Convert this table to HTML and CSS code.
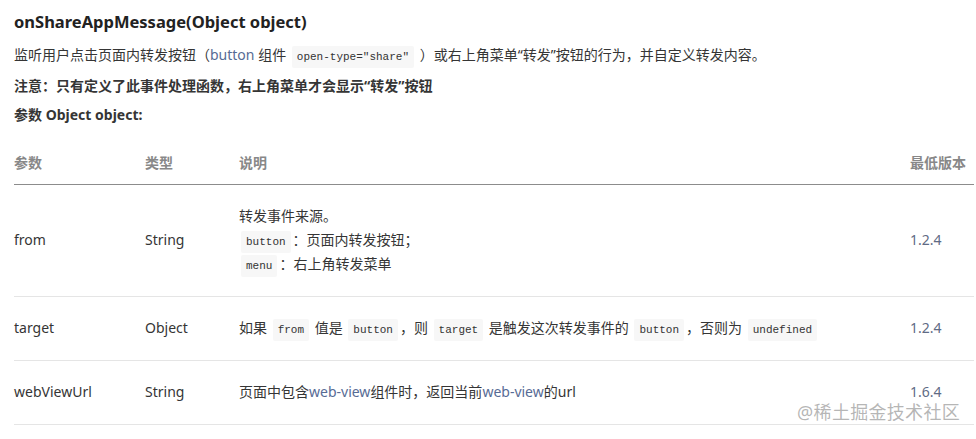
FILE: index.html
```html
<!DOCTYPE html>
<html lang="zh-CN">
  <head>
    <meta charset="utf-8" />
    <title>onShareAppMessage</title>
    <link rel="stylesheet" href="styles.css">
  </head>
  <body>
    <div class="doc">
      <h3 class="api-title">onShareAppMessage(Object object)</h3>
      <p>监听用户点击页面内转发按钮（<a href="#">button</a> 组件 <code>open-type="share"</code> ）或右上角菜单“转发”按钮的行为，并自定义转发内容。</p>
      <p class="note">注意：只有定义了此事件处理函数，右上角菜单才会显示“转发”按钮</p>
      <p class="param-title">参数 Object object:</p>

      <table class="param-table">
        <colgroup>
          <col class="col-name" />
          <col class="col-type" />
          <col class="col-desc" />
          <col class="col-ver" />
        </colgroup>
        <thead>
          <tr>
            <th>参数</th>
            <th>类型</th>
            <th>说明</th>
            <th>最低版本</th>
          </tr>
        </thead>
        <tbody>
          <tr>
            <td>from</td>
            <td>String</td>
            <td>
              <div>转发事件来源。</div>
              <div><code>button</code>：页面内转发按钮；</div>
              <div><code>menu</code>：右上角转发菜单</div>
            </td>
            <td><a href="#" class="ver">1.2.4</a></td>
          </tr>
          <tr>
            <td>target</td>
            <td>Object</td>
            <td>如果 <code>from</code> 值是 <code>button</code>，则 <code>target</code> 是触发这次转发事件的 <code>button</code>，否则为 <code>undefined</code></td>
            <td><a href="#" class="ver">1.2.4</a></td>
          </tr>
          <tr>
            <td>webViewUrl</td>
            <td>String</td>
            <td>页面中包含<a href="#">web-view</a>组件时，返回当前<a href="#">web-view</a>的url</td>
            <td><a href="#" class="ver">1.6.4</a></td>
          </tr>
        </tbody>
      </table>

      <div class="watermark">@稀土掘金技术社区</div>
    </div>
  </body>
</html>
```

FILE: styles.css
```css
* {
  margin: 0;
  padding: 0;
  box-sizing: border-box;
}

body {
  font-family: "Noto Sans", "Noto Sans CJK SC", sans-serif;
  font-size: 14px;
  color: #353535;
  background: #ffffff;
}

.doc {
  position: relative;
  padding: 10px 2px 0 14px;
}

.api-title {
  font-size: 16.5px;
  font-weight: 700;
  line-height: 24px;
  color: #222;
}

p {
  line-height: 24px;
  margin-top: 9px;
}

.note {
  font-weight: 700;
  margin-top: 7px;
}

.param-title {
  font-weight: 700;
  margin-top: 5px;
}

a {
  color: #576b95;
  text-decoration: none;
}

code {
  font-family: "Liberation Mono", "DejaVu Sans Mono", monospace;
  font-size: 11px;
  line-height: 1;
  color: #333;
  background: #f7f7f7;
  padding: 5px 5px;
  border-radius: 2px;
  margin: 0 2px;
}

.param-table {
  width: 960px;
  margin-top: 12px;
  border-collapse: collapse;
  table-layout: fixed;
}

.col-name { width: 131px; }
.col-type { width: 94px; }
.col-desc { width: 671px; }
.col-ver { width: 64px; }

.param-table th {
  text-align: left;
  font-weight: 700;
  color: #888;
  line-height: 24px;
  padding: 12px 0 9px;
  border-bottom: 1px solid #8c8c8c;
}

.param-table td {
  line-height: 24px;
  padding: 19px 0 20px;
  vertical-align: middle;
  border-bottom: 1px solid #e5e5e5;
}

.ver {
  color: #5f6b85;
}

.watermark {
  position: absolute;
  right: 16px;
  top: 398px;
  font-size: 18px;
  color: rgba(150, 150, 150, 0.7);
  letter-spacing: 0.3px;
}
```
